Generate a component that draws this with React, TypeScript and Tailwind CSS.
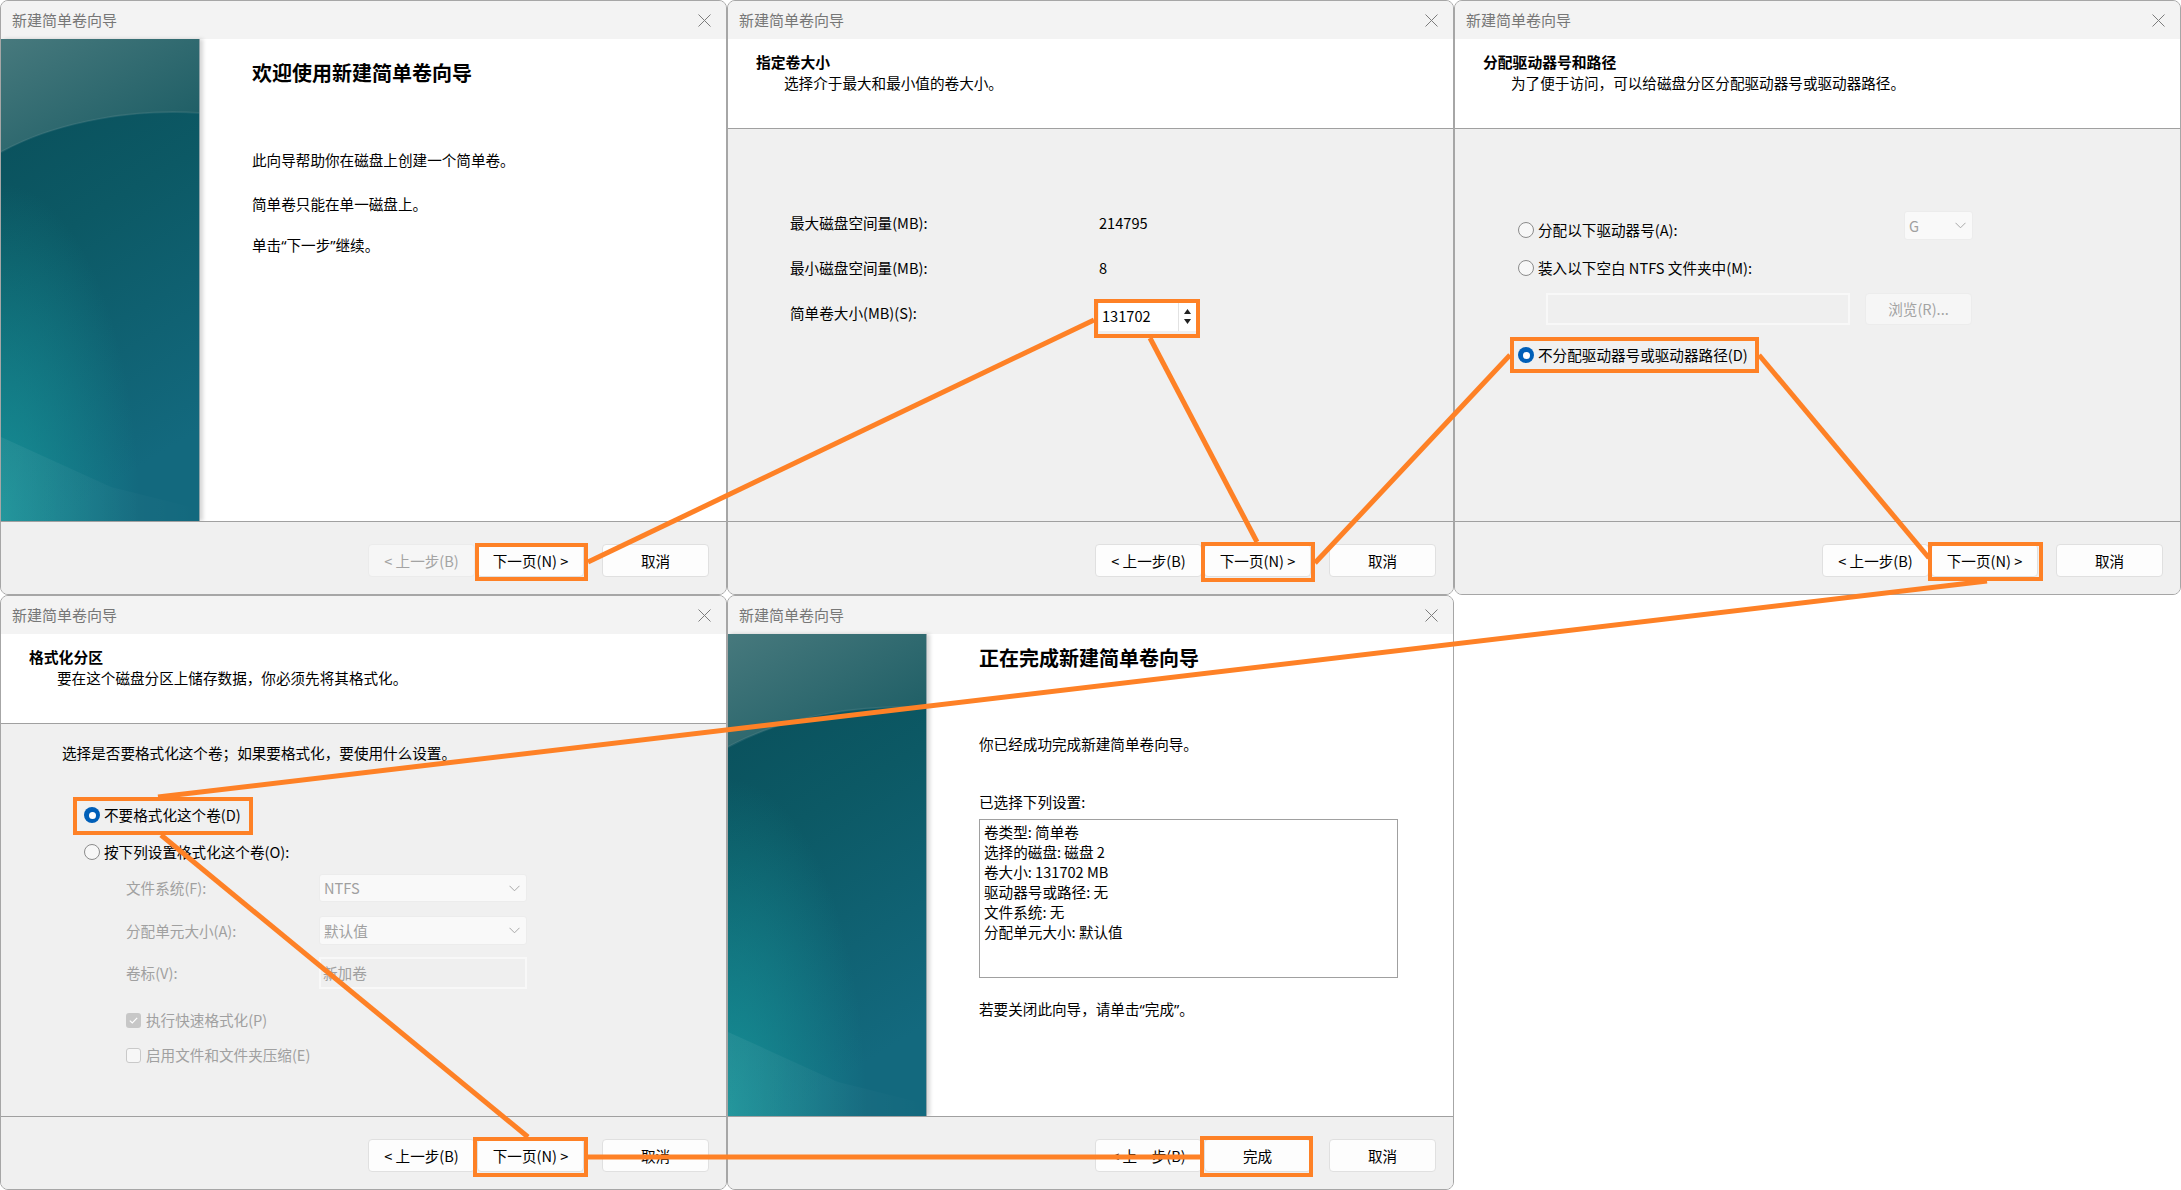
import React from "react";
import clsx from "clsx";

// orange annotation overlay: boxes [x, y, w, h] and connector lines [x1, y1, x2, y2]
const BOXES = [
  [477, 545, 109, 34],
  [1096, 301, 102, 35],
  [1203, 544, 110, 36],
  [1512, 339, 245, 32],
  [1930, 544, 111, 35],
  [75, 799, 176, 34],
  [475, 1139, 111, 36],
  [1202, 1138, 109, 37],
];

const LINES = [
  [588, 562, 1094, 320],
  [1150, 338, 1257, 542],
  [1315, 563, 1510, 355],
  [1759, 355, 1929, 558],
  [1987, 581, 158, 797],
  [161, 835, 528, 1137],
  [588, 1157, 1200, 1157],
];

function CloseIcon() {
  return (
    <svg width="13" height="13" viewBox="0 0 13 13" className="text-[#7c7c7c]">
      <path d="M0.5 0.5L12.5 12.5M12.5 0.5L0.5 12.5" stroke="currentColor" strokeWidth="1" />
    </svg>
  );
}

function Chevron() {
  return (
    <svg width="11" height="7" viewBox="0 0 11 7" className="text-[#a8a8a8]">
      <path d="M0.5 0.8L5.5 5.8L10.5 0.8" stroke="currentColor" strokeWidth="1" fill="none" />
    </svg>
  );
}

// narrow latin quotes, the CJK font would draw them full width
function Q({ children }: { children: React.ReactNode }) {
  return <span className="[font-family:'Noto_Sans',sans-serif]">{children}</span>;
}

function Btn({ children, disabled }: { children: React.ReactNode; disabled?: boolean }) {
  return (
    <div
      className={clsx(
        "flex h-[33px] w-[107px] items-center justify-center rounded-[4px] border text-[14.6px]",
        disabled
          ? "border-[#ebebeb] bg-[#f6f6f6] text-[#a3a3a3]"
          : "border-[#e0e0e0] bg-[#fdfdfd] text-black"
      )}
    >
      {children}
    </div>
  );
}

function Radio({ checked }: { checked?: boolean }) {
  if (checked) {
    return (
      <span className="flex h-[16px] w-[16px] shrink-0 items-center justify-center rounded-full bg-[#005fb8]">
        <span className="h-[7px] w-[7px] rounded-full bg-white" />
      </span>
    );
  }
  return <span className="h-[16px] w-[16px] shrink-0 rounded-full border border-[#8b8b8b] bg-[#f7f7f7]" />;
}

function Check({ checked }: { checked?: boolean }) {
  if (checked) {
    return (
      <span className="flex h-[15px] w-[15px] shrink-0 items-center justify-center rounded-[3px] bg-[#c7c7c7]">
        <svg width="9" height="7" viewBox="0 0 9 7">
          <path d="M0.8 3.6L3.3 6L8.2 0.9" stroke="white" strokeWidth="1.2" fill="none" />
        </svg>
      </span>
    );
  }
  return <span className="h-[15px] w-[15px] shrink-0 rounded-[3px] border border-[#c9c9c9] bg-[#f7f7f7]" />;
}

function Select({ value, className }: { value: string; className: string }) {
  return (
    <div
      className={clsx(
        "flex items-center justify-between rounded-[3px] border border-[#ececec] bg-[#f9f9f9] pl-[4px] pr-[6px] text-[14.6px] text-[#a0a0a0]",
        className
      )}
    >
      <span>{value}</span>
      <Chevron />
    </div>
  );
}

function Banner() {
  return (
    <div className="h-full w-[199px] shrink-0 border-r border-[#8fa3a8] shadow-[3px_0_4px_rgba(0,0,0,0.16)]">
      <svg width="198" height="482" viewBox="0 0 198 482" className="block">
        <defs>
          <linearGradient id="bnBase" x1="0" y1="0" x2="0.25" y2="1">
            <stop offset="0" stopColor="#094d58" />
            <stop offset="0.45" stopColor="#0c5965" />
            <stop offset="1" stopColor="#13697e" />
          </linearGradient>
          <radialGradient id="bnGlow" cx="0" cy="1" r="0.7">
            <stop offset="0" stopColor="#17979b" stopOpacity="0.85" />
            <stop offset="1" stopColor="#17979b" stopOpacity="0" />
          </radialGradient>
          <linearGradient id="bnCap" x1="0" y1="0" x2="1" y2="1">
            <stop offset="0" stopColor="#47797d" />
            <stop offset="1" stopColor="#185a62" />
          </linearGradient>
          <linearGradient id="bnBand" x1="0" y1="0" x2="1" y2="0">
            <stop offset="0" stopColor="#ffffff" stopOpacity="0.06" />
            <stop offset="1" stopColor="#ffffff" stopOpacity="0" />
          </linearGradient>
        </defs>
        <rect width="198" height="482" fill="url(#bnBase)" />
        <rect width="198" height="482" fill="url(#bnGlow)" />
        <path d="M0 0H198V74C140 70 60 80 0 113Z" fill="url(#bnCap)" />
        <path d="M0 113C60 80 140 70 198 74" stroke="#ffffff" strokeOpacity="0.07" strokeWidth="2" fill="none" />
        <path d="M0 398L110 448L198 470V482H0Z" fill="url(#bnBand)" />
      </svg>
    </div>
  );
}

function Header({ title, subtitle }: { title: string; subtitle: string }) {
  return (
    <div className="h-[90px] border-b border-[#a0a0a0] bg-white pl-[28px] pt-[13px] text-black">
      <div className="text-[14.8px] font-bold leading-[20px]">{title}</div>
      <div className="mt-[1px] pl-[28px] text-[14.6px] leading-[20px]">{subtitle}</div>
    </div>
  );
}

function Window({
  children,
  backDisabled,
  nextLabel = "下一页(N) >",
}: {
  children: React.ReactNode;
  backDisabled?: boolean;
  nextLabel?: string;
}) {
  return (
    <div className="flex h-[595px] w-[727px] flex-col overflow-hidden rounded-[8px] border border-[#a6a6a6] bg-[#f0f0f0]">
      <div className="flex h-[38px] shrink-0 items-center justify-between bg-[#f3f3f3] pl-[11px] pr-[15px]">
        <span className="text-[15px] text-[#777777]">新建简单卷向导</span>
        <CloseIcon />
      </div>
      <div className="h-[482px] shrink-0">{children}</div>
      <div className="flex flex-1 justify-end border-t border-[#a0a0a0] bg-[#f0f0f0] pr-[17px] pt-[22px]">
        <div className="flex gap-[2px]">
          <Btn disabled={backDisabled}>&lt; 上一步(B)</Btn>
          <Btn>{nextLabel}</Btn>
        </div>
        <div className="ml-[18px]">
          <Btn>取消</Btn>
        </div>
      </div>
    </div>
  );
}

function WelcomePage() {
  return (
    <Window backDisabled>
      <div className="flex h-full bg-white">
        <Banner />
        <div className="pl-[52px] pt-[20px] text-[14.6px] leading-[20px] text-black">
          <h1 className="text-[20px] font-bold leading-[28px]">欢迎使用新建简单卷向导</h1>
          <p className="mt-[63px]">此向导帮助你在磁盘上创建一个简单卷。</p>
          <p className="mt-[24px]">简单卷只能在单一磁盘上。</p>
          <p className="mt-[21px]">
            单击<Q>“</Q>下一步<Q>”</Q>继续。
          </p>
        </div>
      </div>
    </Window>
  );
}

function SizePage() {
  return (
    <Window>
      <Header title="指定卷大小" subtitle="选择介于最大和最小值的卷大小。" />
      <div className="flex flex-col gap-[15px] pl-[62px] pt-[79px] text-[14.6px] leading-[20px] text-black">
        <div className="flex h-[30px] items-center">
          <span className="w-[309px]">最大磁盘空间量(MB):</span>
          <span>214795</span>
        </div>
        <div className="flex h-[30px] items-center">
          <span className="w-[309px]">最小磁盘空间量(MB):</span>
          <span>8</span>
        </div>
        <div className="flex h-[33px] items-start">
          <span className="w-[309px] pt-[5px]">简单卷大小(MB)(S):</span>
          <div className="mt-[4px] flex h-[29px] w-[97px] bg-white">
            <span className="flex-1 pl-[3px] leading-[27px]">131702</span>
            <div className="flex w-[18px] flex-col items-center justify-center gap-[5px] border-l border-[#e2e2e2]">
              <svg width="7" height="5" viewBox="0 0 7 5">
                <path d="M3.5 0L7 5H0Z" fill="#222" />
              </svg>
              <svg width="7" height="5" viewBox="0 0 7 5">
                <path d="M0 0H7L3.5 5Z" fill="#222" />
              </svg>
            </div>
          </div>
        </div>
      </div>
    </Window>
  );
}

function LetterPage() {
  return (
    <Window>
      <Header title="分配驱动器号和路径" subtitle="为了便于访问，可以给磁盘分区分配驱动器号或驱动器路径。" />
      <div className="flex flex-col pl-[63px] pt-[82px] text-[14.6px] leading-[20px] text-black">
        <div className="flex h-[29px] items-start">
          <div className="flex w-[386px] items-center gap-[4px] pt-[9px]">
            <Radio />
            <span>分配以下驱动器号(A):</span>
          </div>
          <Select value="G" className="h-[29px] w-[69px]" />
        </div>
        <div className="mt-[18px] flex h-[20px] items-center gap-[4px]">
          <Radio />
          <span>装入以下空白 NTFS 文件夹中(M):</span>
        </div>
        <div className="ml-[28px] mt-[15px] flex gap-[15px]">
          <div className="h-[32px] w-[304px] border-2 border-[#f8f8f8] bg-[#efefef]" />
          <div className="flex h-[32px] w-[107px] items-center justify-center rounded-[4px] border border-[#ececec] bg-[#f6f6f6] text-[#a3a3a3]">
            浏览(R)...
          </div>
        </div>
        <div className="mt-[20px] flex h-[20px] items-center gap-[4px]">
          <Radio checked />
          <span>不分配驱动器号或驱动器路径(D)</span>
        </div>
      </div>
    </Window>
  );
}

function FormatPage() {
  return (
    <Window>
      <Header title="格式化分区" subtitle="要在这个磁盘分区上储存数据，你必须先将其格式化。" />
      <div className="flex flex-col pl-[61px] pt-[19px] text-[14.6px] leading-[20px] text-black">
        <p>选择是否要格式化这个卷；如果要格式化，要使用什么设置。</p>
        <div className="ml-[22px] mt-[42px] flex h-[20px] items-center gap-[4px]">
          <Radio checked />
          <span>不要格式化这个卷(D)</span>
        </div>
        <div className="ml-[22px] mt-[17px] flex h-[20px] items-center gap-[4px]">
          <Radio />
          <span>按下列设置格式化这个卷(O):</span>
        </div>
        <div className="ml-[64px] mt-[12px] flex flex-col text-[#a0a0a0]">
          <div className="flex h-[28px] items-center">
            <span className="w-[193px]">文件系统(F):</span>
            <Select value="NTFS" className="h-[28px] w-[208px]" />
          </div>
          <div className="mt-[14px] flex h-[29px] items-center">
            <span className="w-[193px]">分配单元大小(A):</span>
            <Select value="默认值" className="h-[29px] w-[208px]" />
          </div>
          <div className="mt-[12px] flex h-[32px] items-center">
            <span className="w-[193px]">卷标(V):</span>
            <div className="flex h-[32px] w-[208px] items-center border-2 border-[#f8f8f8] bg-[#efefef] pl-[2px]">
              新加卷
            </div>
          </div>
          <div className="mt-[21px] flex h-[20px] items-center gap-[5px]">
            <Check checked />
            <span>执行快速格式化(P)</span>
          </div>
          <div className="mt-[15px] flex h-[20px] items-center gap-[5px]">
            <Check />
            <span>启用文件和文件夹压缩(E)</span>
          </div>
        </div>
      </div>
    </Window>
  );
}

function FinishPage() {
  return (
    <Window nextLabel="完成">
      <div className="flex h-full bg-white">
        <Banner />
        <div className="pl-[52px] pt-[10px] text-[14.6px] leading-[20px] text-black">
          <h1 className="text-[20px] font-bold leading-[28px]">正在完成新建简单卷向导</h1>
          <p className="mt-[62px]">你已经成功完成新建简单卷向导。</p>
          <p className="mt-[38px]">已选择下列设置:</p>
          <div className="mt-[7px] h-[159px] w-[419px] border border-[#a0a0a0] bg-white pl-[4px] pt-[2px]">
            <p>卷类型: 简单卷</p>
            <p>选择的磁盘: 磁盘 2</p>
            <p>卷大小: 131702 MB</p>
            <p>驱动器号或路径: 无</p>
            <p>文件系统: 无</p>
            <p>分配单元大小: 默认值</p>
          </div>
          <p className="mt-[21px]">
            若要关闭此向导，请单击<Q>“</Q>完成<Q>”</Q>。
          </p>
        </div>
      </div>
    </Window>
  );
}

export default function App() {
  return (
    <div className="relative grid h-[1190px] w-[2181px] grid-cols-[727px_727px_727px] grid-rows-[595px_595px] overflow-hidden bg-white [font-family:'Noto_Sans_CJK_SC',sans-serif]">
      <WelcomePage />
      <SizePage />
      <LetterPage />
      <FormatPage />
      <FinishPage />
      <svg className="pointer-events-none absolute left-0 top-0" width="2181" height="1190" viewBox="0 0 2181 1190">
        {BOXES.map(([x, y, w, h], i) => (
          <rect key={i} x={x} y={y} width={w} height={h} fill="none" stroke="#fe8126" strokeWidth="4" />
        ))}
        {LINES.map(([x1, y1, x2, y2], i) => (
          <line key={i} x1={x1} y1={y1} x2={x2} y2={y2} stroke="#fe8126" strokeWidth="5" />
        ))}
      </svg>
    </div>
  );
}
